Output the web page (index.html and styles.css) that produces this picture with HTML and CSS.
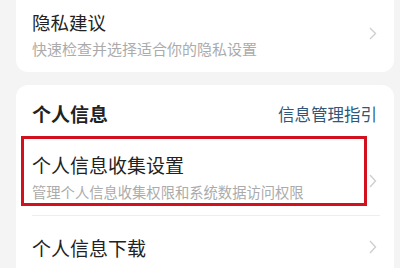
FILE: index.html
```html
<!DOCTYPE html>
<html lang="zh">
<head>
<meta charset="utf-8">
<link rel="stylesheet" href="styles.css">
</head>
<body>
<div class="page">
  <div class="card card-top">
    <div class="row row-first">
      <div class="text">
        <div class="title title-sm">隐私建议</div>
        <div class="sub sub-lg">快速检查并选择适合你的隐私设置</div>
      </div>
      <svg class="chev" width="8" height="13" viewBox="0 0 8 13"><path d="M1 1l5.5 5.5L1 12" fill="none" stroke="#cfcfcf" stroke-width="1.4"/></svg>
    </div>
  </div>
  <div class="card card-info">
    <div class="head">
      <div class="head-title">个人信息</div>
      <div class="head-link">信息管理指引</div>
    </div>
    <div class="row row-mid">
      <div class="mark"></div>
      <div class="text">
        <div class="title">个人信息收集设置</div>
        <div class="sub">管理个人信息收集权限和系统数据访问权限</div>
      </div>
      <svg class="chev" width="8" height="14" viewBox="0 0 8 14"><path d="M1 1l5.5 6L1 13" fill="none" stroke="#cfcfcf" stroke-width="1.4"/></svg>
    </div>
    <div class="row row-last">
      <div class="text">
        <div class="title">个人信息下载</div>
      </div>
      <svg class="chev" width="8" height="14" viewBox="0 0 8 14"><path d="M1 1l5.5 6L1 13" fill="none" stroke="#cfcfcf" stroke-width="1.4"/></svg>
    </div>
  </div>
</div>
</body>
</html>
```
FILE: styles.css
```css
html, body {
  margin: 0;
  padding: 0;
  background: #f4f4f4;
  overflow: hidden;
}
body {
  width: 400px;
  height: 268px;
  font-family: "Noto Sans CJK SC", "Noto Sans", sans-serif;
  color: #222;
}
.page {
  padding: 0 6px 0 16px;
}
.card {
  background: #fff;
  border-radius: 12px;
  padding: 0 14px 0 16px;
}
.card-top {
  margin-top: -20px;
  padding-top: 30px;
  padding-bottom: 13px;
}
.card-info {
  margin-top: 13px;
  padding-top: 17px;
  border-bottom-left-radius: 0;
  border-bottom-right-radius: 0;
}
.row {
  display: flex;
  align-items: center;
  justify-content: space-between;
  position: relative;
}
.text {
  display: flex;
  flex-direction: column;
  gap: 5px;
}
.title {
  font-size: 19px;
  line-height: 24px;
  color: #222;
}
.title-sm {
  font-size: 18.5px;
}
.sub {
  font-size: 14.3px;
  line-height: 20px;
  color: #ababab;
}
.sub-lg {
  font-size: 15px;
}
.chev {
  margin-right: 3px;
  flex: none;
}
.row-first .chev {
  margin-top: -3px;
}
.head {
  display: flex;
  justify-content: space-between;
  align-items: center;
  height: 24px;
  padding-right: 3px;
}
.head-title {
  font-size: 19px;
  font-weight: bold;
  line-height: 24px;
}
.head-link {
  font-size: 16.5px;
  line-height: 24px;
  color: #2f5878;
}
.row-mid {
  margin-top: 14px;
  padding: 13px 0 13px 0;
  border-bottom: 1px solid #eeeeee;
}
.row-mid .chev {
  margin-top: 6px;
}
.mark {
  position: absolute;
  left: -11px;
  top: -4px;
  width: 346px;
  height: 70px;
  box-sizing: border-box;
  border: 3px solid #d3101d;
}
.row-last {
  padding: 20px 0 8px 0;
}
.row-last .chev {
  margin-top: -3px;
}
```
